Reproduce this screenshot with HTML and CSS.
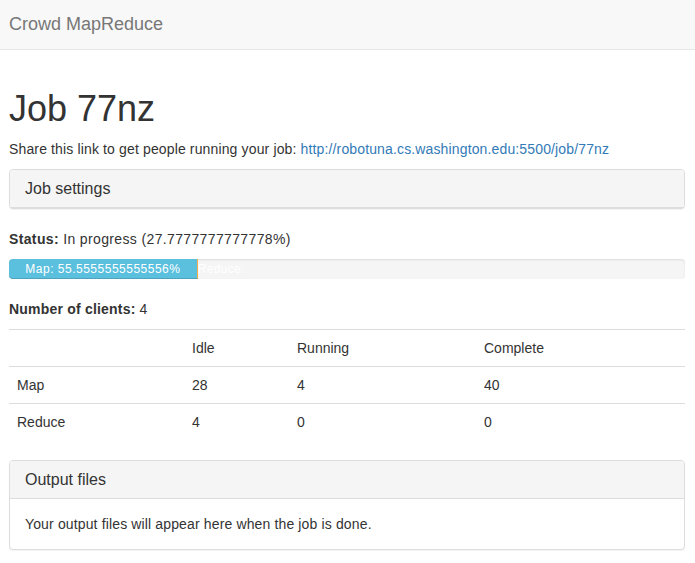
FILE: index.html
```html
<!DOCTYPE html>
<html>
<head>
<meta charset="utf-8">
<link rel="stylesheet" href="styles.css">
</head>
<body>
<nav class="navbar">
  <a class="brand" href="#">Crowd MapReduce</a>
</nav>
<main class="container">
  <h1 class="title">Job 77nz</h1>
  <p class="text share">Share this link to get people running your job: <a class="link" href="#">http://robotuna.cs.washington.edu:5500/job/77nz</a></p>
  <section class="panel">
    <div class="panel-heading"><h3 class="panel-title">Job settings</h3></div>
  </section>
  <p class="text status"><strong>Status:</strong> In progress (27.7777777777778%)</p>
  <div class="progress">
    <div class="bar bar-map" style="width: 27.7777777777778%">Map: 55.5555555555556%</div>
    <div class="bar bar-reduce" style="width: 0%">Reduce: </div>
  </div>
  <p class="text clients"><strong>Number of clients:</strong> 4</p>
  <table class="table">
    <colgroup>
      <col class="c1"><col class="c2"><col class="c3"><col class="c4">
    </colgroup>
    <tbody>
      <tr><td></td><td>Idle</td><td>Running</td><td>Complete</td></tr>
      <tr><td>Map</td><td>28</td><td>4</td><td>40</td></tr>
      <tr><td>Reduce</td><td>4</td><td>0</td><td>0</td></tr>
    </tbody>
  </table>
  <section class="panel">
    <div class="panel-heading"><h3 class="panel-title">Output files</h3></div>
    <div class="panel-body">Your output files will appear here when the job is done.</div>
  </section>
</main>
</body>
</html>
```
FILE: styles.css
```css
* { box-sizing: border-box; }
html, body { margin: 0; padding: 0; }
body {
  font-family: "Liberation Sans", Arial, Helvetica, sans-serif;
  font-size: 14px;
  line-height: 20px;
  color: #333;
  background: #fff;
}
.navbar {
  height: 50px;
  background: #f8f8f8;
  border-bottom: 1px solid #e7e7e7;
  margin-bottom: 20px;
  display: flex;
  align-items: center;
}
.brand {
  font-size: 18px;
  line-height: 20px;
  color: #777;
  text-decoration: none;
  padding-left: 9px;
  margin-top: -2px;
}
.container {
  display: flow-root;
  padding: 0 10px 0 9px;
}
.title {
  font-size: 36px;
  font-weight: 500;
  line-height: 40px;
  margin: 19px 0 10px;
}
.text { margin: 0 0 10px; }
.text strong { font-weight: bold; }
.share { letter-spacing: 0.14px; }
.status { letter-spacing: 0.36px; }
.clients { letter-spacing: 0.2px; }
.link { color: #337ab7; text-decoration: none; }
.panel {
  border: 1px solid #ddd;
  border-radius: 4px;
  background: #fff;
  box-shadow: 0 1px 1px rgba(0,0,0,.05);
  margin-bottom: 20px;
}
.panel-heading {
  background: #f5f5f5;
  padding: 10px 15px;
  border-bottom: 1px solid #ddd;
  border-radius: 3px 3px 0 0;
}
.panel-title {
  margin: 0;
  font-size: 16px;
  font-weight: 500;
  line-height: 17px;
  color: #333;
}
.panel-body {
  padding: 15px;
  letter-spacing: 0.14px;
}
.progress {
  height: 20px;
  margin-bottom: 20px;
  background: #f5f5f5;
  border-radius: 4px;
  box-shadow: inset 0 1px 2px rgba(0,0,0,.1);
  display: flex;
}
.bar {
  height: 20px;
  font-size: 12px;
  line-height: 20px;
  color: #fff;
  text-align: center;
  white-space: nowrap;
  flex: none;
  letter-spacing: 0.5px;
  box-shadow: inset 0 -1px 0 rgba(0,0,0,.15);
}
.bar-map { background: #5bc0de; border-radius: 4px 0 0 4px; }
.bar-reduce { background: #f0ad4e; text-align: left; padding-left: 1px; letter-spacing: 0.3px; }
.table {
  width: 100%;
  border-collapse: collapse;
  margin-bottom: 20px;
}
.table td {
  padding: 8px;
  border-top: 1px solid #ddd;
  line-height: 20px;
  vertical-align: top;
  text-align: left;
}
.c1 { width: 175px; }
.c2 { width: 105px; }
.c3 { width: 187px; }
```
